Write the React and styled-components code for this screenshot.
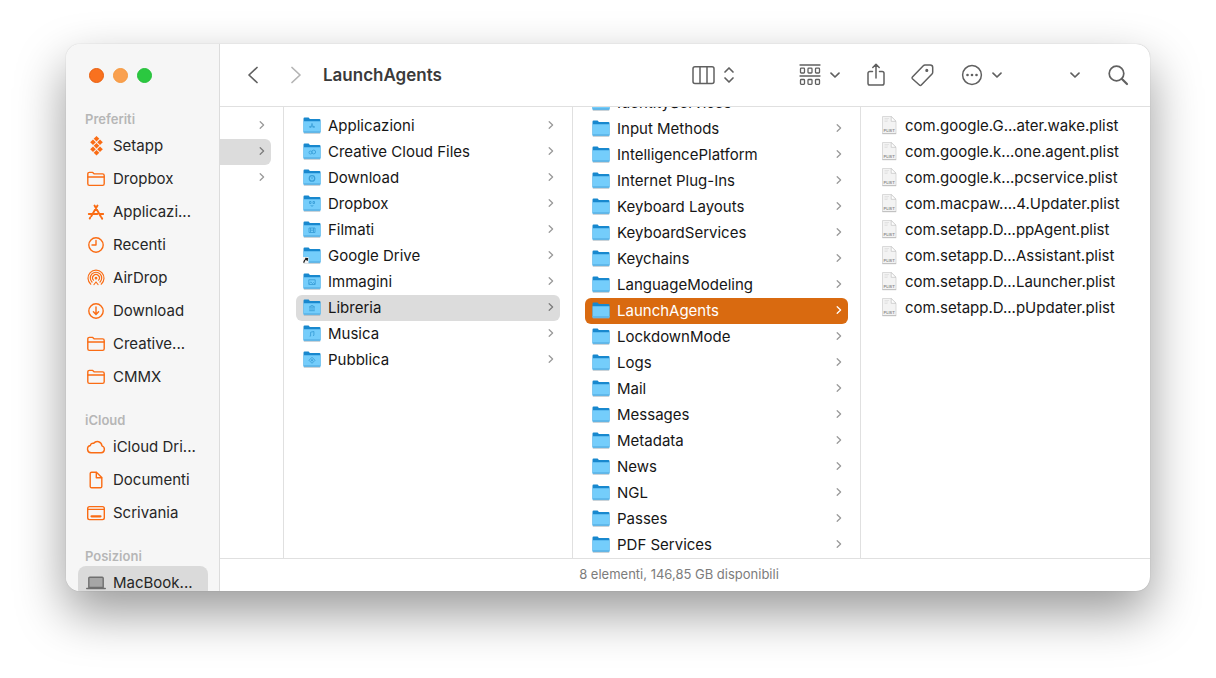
import React from 'react'
import styled, { createGlobalStyle } from 'styled-components'

const GlobalStyle = createGlobalStyle`
  * {
    box-sizing: border-box;
  }
  body {
    margin: 0;
    background: #ffffff;
    font-family: Inter, "Liberation Sans", sans-serif;
    font-size: 15px;
    color: #1c1c1c;
  }
  button {
    margin: 0;
    padding: 0;
    border: 0;
    background: none;
    font: inherit;
    color: inherit;
  }
  ul {
    margin: 0;
    padding: 0;
    list-style: none;
  }
  svg {
    display: block;
    flex: none;
  }
`

const Page = styled.div`
  display: flex;
  height: 100vh;
  padding: 44px 66px 87px;
`
const Window = styled.div`
  flex: 1;
  min-width: 0;
  display: flex;
  overflow: hidden;
  border-radius: 14px;
  background: #ffffff;
  box-shadow: 0 0 1px rgba(0, 0, 0, 0.3), 0 22px 50px rgba(0, 0, 0, 0.4);
`
const Sidebar = styled.nav`
  flex: none;
  width: 154px;
  padding: 0 11px 0 12px;
  overflow: hidden;
  background: #f6f6f6;
  border-right: 1px solid #dcdcdc;
`
const Lights = styled.div`
  display: flex;
  align-items: center;
  gap: 9px;
  height: 62px;
  padding-left: 11px;
`
const Light = styled.button`
  width: 15px;
  height: 15px;
  border-radius: 50%;
  background: ${props => props.$color};
  border: 1px solid ${props => props.$edge};
`
const Places = styled.section`
  margin-bottom: 17px;

  &:first-of-type {
    padding-top: 3px;
  }
`
const PlacesTitle = styled.h2`
  margin: 0;
  padding-left: 7px;
  font-size: 13px;
  font-weight: 600;
  line-height: 20px;
  color: #b6b6b6;
`
const Place = styled.a`
  display: flex;
  align-items: center;
  gap: 7px;
  height: 33px;
  padding-left: 8px;
  border-radius: 8px;
  background: ${props => (props.$active ? '#dadada' : 'transparent')};
  color: #262626;
  text-decoration: none;
  white-space: nowrap;
`
const Main = styled.main`
  flex: 1;
  min-width: 0;
  display: flex;
  flex-direction: column;
`
const Toolbar = styled.header`
  flex: none;
  display: flex;
  align-items: center;
  gap: 26px;
  height: 63px;
  padding: 0 21px 0 28px;
  border-bottom: 1px solid #e0e0e0;
  color: #606060;
`
const Heading = styled.div`
  flex: 1;
  display: flex;
  align-items: center;
  gap: 22px;
`
const History = styled.div`
  display: flex;
  gap: 33px;
`
const Title = styled.h1`
  margin: 0;
  font-size: 17px;
  font-weight: 600;
  line-height: 24px;
  color: #3a3a3a;
`
const ToolButton = styled.button`
  flex: none;
  display: flex;
  align-items: center;
  gap: 8px;
  margin-right: ${props => props.$after || 0}px;
`
const Columns = styled.div`
  flex: 1;
  min-height: 0;
  display: grid;
  grid-template-columns: 64px 289px 288px minmax(0, 1fr);
`
const Column = styled.ul`
  display: flex;
  flex-direction: column;
  justify-content: ${props => (props.$scrolled ? 'flex-end' : 'flex-start')};
  min-height: 0;
  padding: ${props => (props.$scrolled ? '0 12px' : '6px 12px 0')};
  padding-left: ${props => (props.$cut ? '0' : '12px')};
  overflow: hidden;
  border-right: 1px solid #e0e0e0;

  &:last-child {
    border-right: 0;
  }
`
const rowColors = {
  idle: ['transparent', '#161616', '#9a9a9a'],
  parent: ['#dcdcdc', '#161616', '#7c7c7c'],
  current: ['#d96a10', '#ffffff', '#ffffff'],
}
const Row = styled.button`
  display: flex;
  align-items: center;
  gap: 7px;
  width: 100%;
  height: 26px;
  padding: 0 5px 2px 7px;
  border-radius: ${props => (props.$cut ? '0 6px 6px 0' : '6px')};
  background: ${props => rowColors[props.$state][0]};
  color: ${props => rowColors[props.$state][1]};
  text-align: left;
  white-space: nowrap;

  > svg:last-child {
    color: ${props => rowColors[props.$state][2]};
  }
`
const RowName = styled.span`
  flex: 1;
`
const Status = styled.footer`
  flex: none;
  height: 33px;
  padding-right: 12px;
  border-top: 1px solid #e0e0e0;
  font-size: 13px;
  line-height: 31px;
  text-align: center;
  color: #7c7c7c;
`

const Line = ({ w, h, width = 1.5, children }) => (
  <svg
    width={w}
    height={h}
    viewBox={`0 0 ${w} ${h}`}
    fill="none"
    stroke="currentColor"
    strokeWidth={width}
    strokeLinecap="round"
    strokeLinejoin="round"
    aria-hidden="true"
  >
    {children}
  </svg>
)

const RowArrow = () => (
  <Line w={8} h={10} width={1.3}>
    <path d="M2.2 1.8 5.6 5 2.2 8.2" />
  </Line>
)
const DownArrow = () => (
  <Line w={12} h={8} width={1.7}>
    <path d="M2 2.2 6 6l4-3.8" />
  </Line>
)

const setappTiles = [[10.5, 2.8], [7, 6.3], [14, 6.3], [10.5, 9.8], [7, 13.3], [14, 13.3], [10.5, 16.8]]

const placeIcons = {
  setapp: (
    <g fill="currentColor" stroke="none">
      {setappTiles.map(([x, y]) => (
        <path key={`${x}-${y}`} d={`M${x} ${y - 2.8}l2.800 2.800-2.800 2.800-2.800-2.800z`} />
      ))}
    </g>
  ),
  folder: (
    <>
      <path d="M1.800 14.800V5a1.600 1.600 0 0 1 1.600-1.600h3.300l1.600 1.500h8.300a1.600 1.600 0 0 1 1.600 1.600v8.300a1.600 1.600 0 0 1-1.600 1.600H3.400a1.600 1.600 0 0 1-1.600-1.600z" />
      <path d="M2 8h16" />
    </>
  ),
  apps: (
    <g strokeWidth="1.900">
      <path d="M11.500 3.500 5.400 14M8.500 3.500l6.300 11M2.800 12h8.500M14.200 12h3M4.300 15.400l-.6 1M15.500 15.500l.7 1.200" />
    </g>
  ),
  recent: (
    <>
      <circle cx="10" cy="10" r="7.200" />
      <path d="M10 5.400V10H6" />
    </>
  ),
  airdrop: (
    <g strokeWidth="1.200">
      <path d="M4.800 16.200a8 8 0 1 1 10.400 0" />
      <path d="M6 14a5.700 5.700 0 1 1 8 0" />
      <path d="M7.500 12.200a3.400 3.400 0 1 1 5 0" />
      <circle cx="10" cy="10.200" r=".8" fill="currentColor" />
      <path d="M8 16.500l2-2.500 2 2.500" />
    </g>
  ),
  download: (
    <>
      <circle cx="10" cy="10" r="7.200" />
      <path d="M10 6v7.200M7.400 10.800 10 13.400l2.600-2.600" />
    </>
  ),
  cloud: (
    <path d="M5 15.800a3.700 3.700 0 0 1-.6-7.300 2.600 2.600 0 0 1 3.300-2.200 4.600 4.600 0 0 1 8.200 2.500 3.600 3.600 0 0 1-.7 7z" />
  ),
  document: (
    <>
      <path d="M4.200 3.600a1.400 1.400 0 0 1 1.400-1.400h4.800l5.400 5.400v8.800a1.400 1.400 0 0 1-1.400 1.400H5.600a1.400 1.400 0 0 1-1.400-1.400z" />
      <path d="M10.300 2.400v5.300h5.300" />
    </>
  ),
  desktop: (
    <>
      <rect x="1.700" y="3.600" width="16.600" height="13" rx="1.800" />
      <path d="M2 6.400h16" />
      <path d="M5.500 13.300h9" strokeWidth="2.200" />
    </>
  ),
  laptop: (
    <>
      <path d="M2.800 14.500V5.200a1 1 0 0 1 1-1h12.400a1 1 0 0 1 1 1v9.300z" fill="#a6a6a6" />
      <path d="M.700 15.500h18.600" />
    </>
  ),
}

const PlaceIcon = ({ name }) => (
  <Line w={20} h={20} width={1.4}>
    <g color={name === 'laptop' ? '#6f6f6f' : '#fa6c14'} stroke={name === 'laptop' ? '#6f6f6f' : '#fa6c14'}>
      {placeIcons[name]}
    </g>
  </Line>
)

const folderMarks = {
  apps: <path d="M9.500 7.500 7 12M8.500 7.500l2.700 4.500M6 10.800h6" />,
  cloud: (
    <>
      <circle cx="7.500" cy="10.500" r="1.500" />
      <circle cx="10.700" cy="10" r="1.900" />
    </>
  ),
  download: (
    <>
      <circle cx="9" cy="10.400" r="2.700" strokeWidth="1.300" />
      <path d="M9 9v2.200" />
    </>
  ),
  dropbox: <path d="M6.500 7.500h1.500v2H6.500zM10 7.500h1.500v2H10zM7.700 11 9 12.500l1.300-1.500" />,
  film: <path d="M6 8h6v4.500H6zM7.500 8v4.500M10.500 8v4.500M7.500 10.200h3" />,
  image: <path d="M5.800 7.800h6.400v4.700H5.800zM6 11.800l1.800-2 1.600 1.800 1-1 1.600 1.500" />,
  library: <path d="M6.300 9 9 7.300 11.700 9zM7 9.500V12M9 9.500V12M11 9.500V12M6.200 12.700h5.600" />,
  music: <path d="M7.600 12V8.200l3.300-.7v3.800M6.700 12.200h.9M10 11.500h.9" />,
  shared: <path d="M9 7.300l3 3-3 3-3-3zM9 9v2.400M7.900 10.300h2.200" />,
}

const Folder = ({ mark }) => (
  <svg width="18" height="18" viewBox="0 0 18 18" aria-hidden="true">
    <path d="M.500 15.500V2.800q0-1.200 1.100-1.200h4l1.300 1.300h9.500q1.100 0 1.100 1.100v11.500z" fill="#1888ce" />
    <path d="M.500 5.200h17v10.900q0 1-1 1h-15q-1 0-1-1z" fill="#74cdfb" />
    <path d="M.500 15h17v1.100q0 1-1 1h-15q-1 0-1-1z" fill="#5fb9ec" />
    <path d="M.800 17.300h16.400" stroke="#8fa3ae" strokeWidth=".6" />
    <g fill="none" stroke="#3a9fd8" strokeWidth=".9">{folderMarks[mark]}</g>
    {mark === 'alias' && (
      <>
        <path d="M0 11h5.500v6.500H0z" fill="#f2f2f2" />
        <path d="M.800 16.800q.2-3 3.200-4M2.200 12.300l2.300.2-.4 2.300" fill="none" stroke="#1b1b1b" strokeWidth="1.200" />
      </>
    )}
  </svg>
)

const PlistFile = () => (
  <svg width="18" height="20" viewBox="0 0 18 20" aria-hidden="true">
    <path d="M2.500 1.500h8.700l4.800 4.800v12.200H2.500z" fill="#f3f3f3" stroke="#d2d2d2" strokeWidth=".8" />
    <path d="M11.200 1.500v4.800H16z" fill="#ffffff" stroke="#c6c6c6" strokeWidth=".8" />
    <path d="M4.500 3.500h4.500M4.500 5h3.500M4.500 6.500h3" stroke="#dedede" strokeWidth=".8" />
    <path d="M2.300 18.700h13.900" stroke="#b0b0b0" strokeWidth=".7" />
    <text x="9.200" y="16.600" fontSize="4" fontWeight="600" textAnchor="middle" fill="#8d8d8d">PLIST</text>
  </svg>
)

const places = [
  {
    title: 'Preferiti',
    items: [
      ['setapp', 'Setapp'],
      ['folder', 'Dropbox'],
      ['apps', 'Applicazi...'],
      ['recent', 'Recenti'],
      ['airdrop', 'AirDrop'],
      ['download', 'Download'],
      ['folder', 'Creative...'],
      ['folder', 'CMMX'],
    ],
  },
  {
    title: 'iCloud',
    items: [
      ['cloud', 'iCloud Dri...'],
      ['document', 'Documenti'],
      ['desktop', 'Scrivania'],
    ],
  },
  { title: 'Posizioni', items: [['laptop', 'MacBook...']] },
]

const homeFolders = [
  ['Applicazioni', 'apps'],
  ['Creative Cloud Files', 'cloud'],
  ['Download', 'download'],
  ['Dropbox', 'dropbox'],
  ['Filmati', 'film'],
  ['Google Drive', 'alias'],
  ['Immagini', 'image'],
  ['Libreria', 'library'],
  ['Musica', 'music'],
  ['Pubblica', 'shared'],
]

const libraryFolders = [
  'IdentityServices',
  'Input Methods',
  'IntelligencePlatform',
  'Internet Plug-Ins',
  'Keyboard Layouts',
  'KeyboardServices',
  'Keychains',
  'LanguageModeling',
  'LaunchAgents',
  'LockdownMode',
  'Logs',
  'Mail',
  'Messages',
  'Metadata',
  'News',
  'NGL',
  'Passes',
  'PDF Services',
]

const agentFiles = [
  'com.google.G...ater.wake.plist',
  'com.google.k...one.agent.plist',
  'com.google.k...pcservice.plist',
  'com.macpaw....4.Updater.plist',
  'com.setapp.D...ppAgent.plist',
  'com.setapp.D...Assistant.plist',
  'com.setapp.D...Launcher.plist',
  'com.setapp.D...pUpdater.plist',
]

const FinderToolbar = () => (
  <Toolbar>
    <Heading>
      <History>
        <ToolButton aria-label="Indietro">
          <Line w={10} h={20} width={1.7}>
            <path d="M9 2.500 1 10l8 7.500" />
          </Line>
        </ToolButton>
        <ToolButton aria-label="Avanti" disabled>
          <Line w={10} h={20} width={1.7}>
            <path d="M1 2.500 9 10l-8 7.500" stroke="#b4b4b4" />
          </Line>
        </ToolButton>
      </History>
      <Title>LaunchAgents</Title>
    </Heading>
    <ToolButton aria-label="Vista" $after={38}>
      <Line w={23} h={20}>
        <rect x="1" y="1.800" width="21" height="16.600" rx="2" />
        <path d="M8 2v16M15 2v16" />
      </Line>
      <Line w={12} h={18} width={1.7}>
        <path d="M2 6l4-4 4 4M2 12l4 4 4-4" />
      </Line>
    </ToolButton>
    <ToolButton aria-label="Raggruppa">
      <Line w={22} h={22} width={1.3}>
        <path d="M1 1h20M1 12h20" />
        {[1.5, 9, 16.5].map(x => (
          <React.Fragment key={x}>
            <rect x={x} y="4.200" width="4" height="4.800" rx=".8" />
            <rect x={x} y="15.500" width="4" height="4.800" rx=".8" />
          </React.Fragment>
        ))}
      </Line>
      <DownArrow />
    </ToolButton>
    <ToolButton aria-label="Condividi">
      <Line w={18} h={24}>
        <path d="M5.500 8.500H2.800A1.800 1.800 0 0 0 1 10.300v10a1.800 1.800 0 0 0 1.800 1.800h12.400a1.800 1.800 0 0 0 1.800-1.800v-10a1.800 1.800 0 0 0-1.800-1.800h-2.700M9 15V1.500M5.800 4.500 9 1.300l3.200 3.200" />
      </Line>
    </ToolButton>
    <ToolButton aria-label="Tag">
      <Line w={24} h={24}>
        <path d="M1.400 14 12.300 2.700a2.400 2.400 0 0 1 1.700-.7h5.200a2.500 2.500 0 0 1 2.500 2.500v4.700a2.500 2.500 0 0 1-.7 1.700L10.300 22a1.300 1.300 0 0 1-1.900 0l-7-6.300a1.200 1.200 0 0 1 0-1.700z" />
        <circle cx="15.800" cy="7.400" r=".8" fill="currentColor" />
      </Line>
    </ToolButton>
    <ToolButton aria-label="Altro" $after={40}>
      <Line w={22} h={22}>
        <circle cx="11" cy="11" r="9.400" />
        <g fill="currentColor" stroke="none">
          <circle cx="6.500" cy="11" r="1.300" />
          <circle cx="11" cy="11" r="1.300" />
          <circle cx="15.500" cy="11" r="1.300" />
        </g>
      </Line>
      <DownArrow />
    </ToolButton>
    <ToolButton aria-label="Mostra altro">
      <DownArrow />
    </ToolButton>
    <ToolButton aria-label="Cerca">
      <Line w={22} h={22} width={1.7}>
        <circle cx="9.500" cy="9.500" r="7.300" />
        <path d="M15 15l5 5" strokeWidth="2.200" />
      </Line>
    </ToolButton>
  </Toolbar>
)

const App = () => {
  return (
    <Page>
      <GlobalStyle />
      <Window>
        <Sidebar>
          <Lights>
            <Light $color="#f9711f" $edge="#e9600f" aria-label="Chiudi" />
            <Light $color="#f9a04f" $edge="#f6993f" aria-label="Riduci" />
            <Light $color="#2bc840" $edge="#25bf39" aria-label="Ingrandisci" />
          </Lights>
          {places.map(group => (
            <Places key={group.title}>
              <PlacesTitle>{group.title}</PlacesTitle>
              {group.items.map(([icon, name]) => (
                <Place key={name} href="#" $active={icon === 'laptop'}>
                  <PlaceIcon name={icon} />
                  {name}
                </Place>
              ))}
            </Places>
          ))}
        </Sidebar>
        <Main>
          <FinderToolbar />
          <Columns>
            <Column $cut>
              {['idle', 'parent', 'idle'].map((state, i) => (
                <li key={i}>
                  <Row $cut $state={state} aria-label={`Cartella ${i + 1}`}>
                    <RowName />
                    <RowArrow />
                  </Row>
                </li>
              ))}
            </Column>
            <Column>
              {homeFolders.map(([name, mark]) => (
                <li key={name}>
                  <Row $state={name === 'Libreria' ? 'parent' : 'idle'}>
                    <Folder mark={mark} />
                    <RowName>{name}</RowName>
                    <RowArrow />
                  </Row>
                </li>
              ))}
            </Column>
            <Column $scrolled>
              {libraryFolders.map(name => (
                <li key={name}>
                  <Row $state={name === 'LaunchAgents' ? 'current' : 'idle'}>
                    <Folder />
                    <RowName>{name}</RowName>
                    <RowArrow />
                  </Row>
                </li>
              ))}
            </Column>
            <Column>
              {agentFiles.map(name => (
                <li key={name}>
                  <Row $state="idle">
                    <PlistFile />
                    <RowName>{name}</RowName>
                  </Row>
                </li>
              ))}
            </Column>
          </Columns>
          <Status>8 elementi, 146,85 GB disponibili</Status>
        </Main>
      </Window>
    </Page>
  )
}

export default App
